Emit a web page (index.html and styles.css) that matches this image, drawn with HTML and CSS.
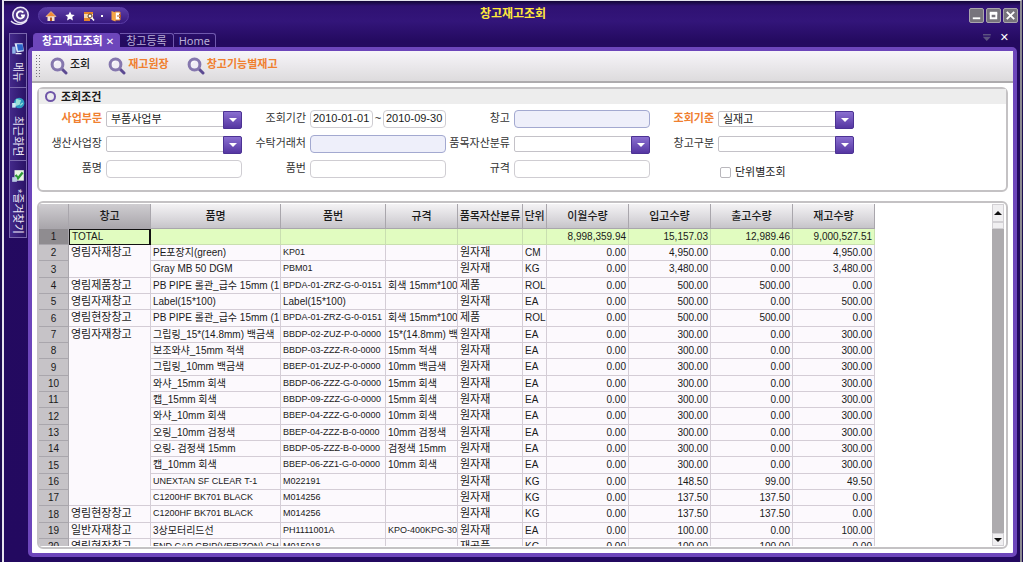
FILE: index.html
```html
<!DOCTYPE html>
<html lang="ko">
<head>
<meta charset="utf-8">
<title>창고재고조회</title>
<link rel="stylesheet" href="styles.css">
</head>
<body>
<svg class="defs" aria-hidden="true">
  <symbol id="lens" viewBox="0 0 18 18">
    <path d="M11.5 11.5 16 16" stroke="#5c4a92" stroke-width="3" stroke-linecap="round"/>
    <circle cx="7.5" cy="7.5" r="5.4" fill="#f1eef6" stroke="#8577ae" stroke-width="3"/>
    <path d="M4.5 7a3 3 0 0 1 3-2.600" fill="none" stroke="#fff" stroke-width="1"/>
  </symbol>
</svg>
<div class="window">
  <header class="titlebar">
    <svg class="logo" viewBox="0 0 20 20" aria-hidden="true">
      <circle cx="10.500" cy="9" r="7.700" fill="#54398f" stroke="#e8e4f5" stroke-width="1.600"/>
      <path d="M1 15c4 4.500 12 4.500 16-1" fill="none" stroke="#e8e4f5" stroke-width="1.400"/>
      <path d="M13.300 6.600A3.600 3.600 0 1 0 14 9.500H11" fill="none" stroke="#fff" stroke-width="1.900"/>
    </svg>
    <nav class="quick">
      <button aria-label="홈"><svg viewBox="0 0 12 12"><path d="M1 6.500 6 1.500l5 5z" fill="#f08a35" stroke="#ffd2a0" stroke-width=".7"/><path d="M2.500 6.500h7V11h-7z" fill="#f6e3cf"/><path d="M5 7.500h2V11H5z" fill="#b4561c"/></svg></button>
      <button aria-label="즐겨찾기"><svg viewBox="0 0 12 12"><path d="m6 1.500 1.400 3 3.300.4-2.400 2.200.6 3.300L6 8.800l-2.900 1.600.6-3.300L1.300 4.900l3.300-.4z" fill="#fff"/></svg></button>
      <button aria-label="화면찾기"><svg viewBox="0 0 12 12"><path d="M1 2h9v7H1z" fill="#f7d9a8"/><path d="M1 2h9v2H1zM1 8h6v3H1z" fill="#e5862b"/><circle cx="7" cy="6" r="2" fill="#fff" stroke="#5b3a20"/><path d="m8.500 7.500 2.500 3" stroke="#fff" stroke-width="1.500"/></svg></button>
      <i class="dot"></i>
      <button aria-label="종료"><svg viewBox="0 0 12 12"><path d="M5 2h5v8H5z" fill="#fff" stroke="#e5862b"/><path d="m1.500 1 4 1.500v9l-4-1.500z" fill="#f6a545"/><path d="M7 6h4M9 4l2 2-2 2" fill="none" stroke="#b4561c"/></svg></button>
    </nav>
    <h1>창고재고조회</h1>
    <div class="controls">
      <button aria-label="최소화"><svg viewBox="0 0 14 14"><path d="M3 10h8" stroke="#fff" stroke-width="2"/></svg></button>
      <button aria-label="최대화"><svg viewBox="0 0 14 14"><path d="M4 5h6v5H4z" fill="none" stroke="#fff" stroke-width="2"/><path d="M3 4.500h8" stroke="#fff" stroke-width="3"/></svg></button>
      <button aria-label="닫기"><svg viewBox="0 0 14 14"><path d="m3 3 8 8m0-8-8 8" stroke="#fff" stroke-width="2"/></svg></button>
    </div>
  </header>
  <div class="body">
    <aside class="side">
      <button class="s1"><svg viewBox="0 0 12 12"><path d="M3 1h7l1 7-6 1z" fill="#dce9fb"/><path d="M5 2h5l.5 5L6 7.500z" fill="#2c64c8"/><path d="M1 4h3v6H1z" fill="#8fb4e8"/><path d="M4 10h5" stroke="#fff"/></svg><span>메뉴</span></button>
      <button class="s2"><svg viewBox="0 0 12 12"><circle cx="7" cy="6" r="4.500" fill="#2e9ac0"/><path d="M5 3l3 1-1 3-3 1zM8 8l2-2" fill="#9be3d9" stroke="#9be3d9"/><path d="M1 6h3v4H1z" fill="#cfe8f6"/></svg><span>최근화면</span></button>
      <button class="s3"><svg viewBox="0 0 12 12"><path d="M3 1h8v9H3z" fill="#e9f5e4"/><path d="m4 5 2 3 4-5" fill="none" stroke="#2f9a37" stroke-width="2"/><path d="M1 7h4v4H1z" fill="#b8cbe4"/></svg><span>*즐겨찾기</span></button>
    </aside>
    <div class="work">
      <nav class="tabs">
        <a class="tab on" href="#">창고재고조회 <b>✕</b></a>
        <a class="tab" href="#">창고등록</a>
        <a class="tab latin" href="#">Home</a>
        <span class="tabtools"><button class="list" aria-label="탭 목록"></button><button aria-label="탭 닫기">✕</button></span>
      </nav>
      <main class="frame">
        <div class="toolbar">
          <i class="grip"></i>
          <button class="t1"><svg><use href="#lens"/></svg>조회</button>
          <button class="hot"><svg><use href="#lens"/></svg>재고원장</button>
          <button class="hot"><svg><use href="#lens"/></svg>창고기능별재고</button>
        </div>
        <section class="panel search">
          <h2>조회조건</h2>
          <form class="fields">
            <div class="field hot"><label for="f1">사업부문</label><span class="combo"><select id="f1"><option>부품사업부</option></select></span></div>
            <div class="field"><label for="f2">조회기간</label><span class="range"><input id="f2" value="2010-01-01"><span>~</span><input aria-label="종료일" value="2010-09-30"></span></div>
            <div class="field"><label for="f3">창고</label><input id="f3" class="code"></div>
            <div class="field hot"><label for="f4">조회기준</label><span class="combo"><select id="f4"><option>실재고</option></select></span></div>
            <div class="field"><label for="f5">생산사업장</label><span class="combo"><select id="f5"><option></option></select></span></div>
            <div class="field"><label for="f6">수탁거래처</label><input id="f6" class="code"></div>
            <div class="field"><label for="f7">품목자산분류</label><span class="combo"><select id="f7"><option></option></select></span></div>
            <div class="field"><label for="f8">창고구분</label><span class="combo"><select id="f8"><option></option></select></span></div>
            <div class="field"><label for="f9">품명</label><input id="f9"></div>
            <div class="field"><label for="f10">품번</label><input id="f10"></div>
            <div class="field"><label for="f11">규격</label><input id="f11"></div>
            <div class="check"><input type="checkbox" id="f12"><label for="f12">단위별조회</label></div>
          </form>
        </section>
        <section class="panel grid">
          <div class="sheet">
          <table>
            <colgroup><col class="w30"><col class="w82"><col class="w130"><col class="w105"><col class="w72"><col class="w65"><col class="w24"><col class="w82"><col class="w82"><col class="w82"><col class="w82"></colgroup>
            <thead><tr><th></th><th class="sel">창고</th><th>품명</th><th>품번</th><th>규격</th><th>품목자산분류</th><th>단위</th><th>이월수량</th><th>입고수량</th><th>출고수량</th><th>재고수량</th></tr></thead>
            <tbody>
            <tr class="total"><th>1</th><td class="cur">TOTAL</td><td></td><td></td><td></td><td></td><td></td><td class="n">8,998,359.94</td><td class="n">15,157.03</td><td class="n">12,989.46</td><td class="n">9,000,527.51</td></tr>
            <tr><th>2</th><td class="k" rowspan="2">영림자재창고</td><td>PE포장지(green)</td><td class="c">KP01</td><td></td><td class="k">원자재</td><td class="c">CM</td><td class="n">0.00</td><td class="n">4,950.00</td><td class="n">0.00</td><td class="n">4,950.00</td></tr>
            <tr><th>3</th><td>Gray MB 50 DGM</td><td class="c">PBM01</td><td></td><td class="k">원자재</td><td class="c">KG</td><td class="n">0.00</td><td class="n">3,480.00</td><td class="n">0.00</td><td class="n">3,480.00</td></tr>
            <tr><th>4</th><td class="k">영림제품창고</td><td>PB PIPE 롤관_급수 15mm (1</td><td class="c">BPDA-01-ZRZ-G-0-0151</td><td>회색 15mm*100M</td><td class="k">제품</td><td class="c">ROL</td><td class="n">0.00</td><td class="n">500.00</td><td class="n">500.00</td><td class="n">0.00</td></tr>
            <tr><th>5</th><td class="k">영림자재창고</td><td>Label(15*100)</td><td>Label(15*100)</td><td></td><td class="k">원자재</td><td class="c">EA</td><td class="n">0.00</td><td class="n">500.00</td><td class="n">0.00</td><td class="n">500.00</td></tr>
            <tr><th>6</th><td class="k">영림현장창고</td><td>PB PIPE 롤관_급수 15mm (1</td><td class="c">BPDA-01-ZRZ-G-0-0151</td><td>회색 15mm*100M</td><td class="k">제품</td><td class="c">ROL</td><td class="n">0.00</td><td class="n">500.00</td><td class="n">500.00</td><td class="n">0.00</td></tr>
            <tr><th>7</th><td class="k" rowspan="11">영림자재창고</td><td>그립링_15*(14.8mm) 백금색</td><td class="c">BBDP-02-ZUZ-P-0-0000</td><td>15*(14.8mm) 백</td><td class="k">원자재</td><td class="c">EA</td><td class="n">0.00</td><td class="n">300.00</td><td class="n">0.00</td><td class="n">300.00</td></tr>
            <tr><th>8</th><td>보조와샤_15mm 적색</td><td class="c">BBDP-03-ZZZ-R-0-0000</td><td>15mm 적색</td><td class="k">원자재</td><td class="c">EA</td><td class="n">0.00</td><td class="n">300.00</td><td class="n">0.00</td><td class="n">300.00</td></tr>
            <tr><th>9</th><td>그립링_10mm 백금색</td><td class="c">BBEP-01-ZUZ-P-0-0000</td><td>10mm 백금색</td><td class="k">원자재</td><td class="c">EA</td><td class="n">0.00</td><td class="n">300.00</td><td class="n">0.00</td><td class="n">300.00</td></tr>
            <tr><th>10</th><td>와샤_15mm 회색</td><td class="c">BBDP-06-ZZZ-G-0-0000</td><td>15mm 회색</td><td class="k">원자재</td><td class="c">EA</td><td class="n">0.00</td><td class="n">300.00</td><td class="n">0.00</td><td class="n">300.00</td></tr>
            <tr><th>11</th><td>캡_15mm 회색</td><td class="c">BBDP-09-ZZZ-G-0-0000</td><td>15mm 회색</td><td class="k">원자재</td><td class="c">EA</td><td class="n">0.00</td><td class="n">300.00</td><td class="n">0.00</td><td class="n">300.00</td></tr>
            <tr><th>12</th><td>와샤_10mm 회색</td><td class="c">BBEP-04-ZZZ-G-0-0000</td><td>10mm 회색</td><td class="k">원자재</td><td class="c">EA</td><td class="n">0.00</td><td class="n">300.00</td><td class="n">0.00</td><td class="n">300.00</td></tr>
            <tr><th>13</th><td>오링_10mm 검정색</td><td class="c">BBEP-04-ZZZ-B-0-0000</td><td>10mm 검정색</td><td class="k">원자재</td><td class="c">EA</td><td class="n">0.00</td><td class="n">300.00</td><td class="n">0.00</td><td class="n">300.00</td></tr>
            <tr><th>14</th><td>오링- 검정색 15mm</td><td class="c">BBDP-05-ZZZ-B-0-0000</td><td>검정색 15mm</td><td class="k">원자재</td><td class="c">EA</td><td class="n">0.00</td><td class="n">300.00</td><td class="n">0.00</td><td class="n">300.00</td></tr>
            <tr><th>15</th><td>캡_10mm 회색</td><td class="c">BBEP-06-ZZ1-G-0-0000</td><td>10mm 회색</td><td class="k">원자재</td><td class="c">EA</td><td class="n">0.00</td><td class="n">300.00</td><td class="n">0.00</td><td class="n">300.00</td></tr>
            <tr><th>16</th><td class="c">UNEXTAN SF CLEAR T-1</td><td class="c">M022191</td><td></td><td class="k">원자재</td><td class="c">KG</td><td class="n">0.00</td><td class="n">148.50</td><td class="n">99.00</td><td class="n">49.50</td></tr>
            <tr><th>17</th><td class="c">C1200HF BK701 BLACK</td><td class="c">M014256</td><td></td><td class="k">원자재</td><td class="c">KG</td><td class="n">0.00</td><td class="n">137.50</td><td class="n">137.50</td><td class="n">0.00</td></tr>
            <tr><th>18</th><td class="k">영림현장창고</td><td class="c">C1200HF BK701 BLACK</td><td class="c">M014256</td><td></td><td class="k">원자재</td><td class="c">KG</td><td class="n">0.00</td><td class="n">137.50</td><td class="n">137.50</td><td class="n">0.00</td></tr>
            <tr><th>19</th><td class="k">일반자재창고</td><td>3상모터리드선</td><td class="c">PH1111001A</td><td class="c">KPO-400KPG-300</td><td class="k">원자재</td><td class="c">EA</td><td class="n">0.00</td><td class="n">100.00</td><td class="n">0.00</td><td class="n">100.00</td></tr>
            <tr><th>20</th><td class="k">영림현장창고</td><td class="c">END CAP GRIP(VERIZON) CH</td><td class="c">M015018</td><td></td><td class="k">재공품</td><td class="c">KG</td><td class="n">0.00</td><td class="n">100.00</td><td class="n">100.00</td><td class="n">0.00</td></tr>
            </tbody>
          </table>
          </div>
          <div class="scroll">
            <button class="up" aria-label="위로"></button>
            <i class="thumb"></i>
            <button class="down" aria-label="아래로"></button>
          </div>
        </section>
      </main>
    </div>
  </div>
</div>
</body>
</html>
```
FILE: styles.css
```css
* { box-sizing: border-box; }
body {
  margin: 0;
  padding: 0 1px 0 2px;
  background: #1c0c50;
  color: #1a1a1a;
  font: 11px/16px "Liberation Sans", "Noto Sans CJK KR", sans-serif;
}
button, input, select { font: inherit; color: inherit; margin: 0; }
button { border: 0; padding: 0; background: none; }
a { text-decoration: none; color: inherit; }
.defs { display: none; }

.window {
  display: flex;
  flex-direction: column;
  height: 100vh;
  border: solid #e6e4ee;
  border-width: 1px 2px 0 2px;
  border-right-color: #8c8a92;
  background: linear-gradient(to bottom, #120636 0, #2f1172 5px, #33157a 20px, #240a60 40px, #230960);
}

/* title bar */
.titlebar {
  display: flex;
  align-items: center;
  flex: none;
  height: 32px;
  padding: 0 2px 3px 6px;
}
.logo { width: 20px; height: 20px; margin-right: 8px; }
.quick {
  display: flex;
  align-items: center;
  justify-content: space-between;
  width: 91px;
  height: 17px;
  padding: 0 6px;
  border: 1px solid #5a3da6;
  border-radius: 9px;
  background: linear-gradient(#5b3da6, #38197e);
}
.quick button, .quick svg { display: block; width: 12px; height: 12px; }
.dot { width: 2px; height: 2px; background: #fff; }
.titlebar h1 {
  flex: 1;
  margin: 0 72px 3px 0;
  text-align: center;
  font-size: 12px;
  line-height: 16px;
  color: #ffe93b;
}
.controls { display: flex; gap: 2px; }
.controls button {
  width: 15px;
  height: 15px;
  border: 1px solid #a9a6ac;
  border-radius: 2px;
  background: #77747c;
}
.controls svg { display: block; width: 13px; height: 13px; }

/* side tabs */
.body { display: flex; flex: 1; min-height: 0; padding: 0 3px 5px 5px; }
.side { width: 19px; flex: none; }
.side button {
  display: flex;
  flex-direction: column;
  align-items: center;
  gap: 6px;
  width: 18px;
  padding-top: 8px;
  border: 1px solid #7a68ae;
  border-bottom-width: 0;
  color: #e9e4f6;
  background: linear-gradient(to right, #43298a, #2a1266);
}
.side .s1 { height: 54px; }
.side .s2 { height: 73px; }
.side .s3 { height: 78px; border-bottom-width: 1px; }
.side svg { width: 14px; height: 14px; flex: none; }
.side span { writing-mode: vertical-rl; text-orientation: sideways; line-height: 14px; white-space: nowrap; }

/* document tabs */
.work { display: flex; flex-direction: column; flex: 1; min-width: 0; }
.tabs { display: flex; flex: none; height: 14px; padding-left: 5px; }
.tab {
  height: 14px;
  padding: 0 6px;
  border: 1px solid #6f58ad;
  border-left-width: 0;
  border-bottom: 0;
  border-radius: 0 3px 0 0;
  line-height: 14px;
  color: #b9aed6;
  white-space: nowrap;
}
.tab.latin { padding: 0 5px; font: 11px/14px "Noto Sans", sans-serif; }
.tab.on {
  padding: 0 5px 0 9px;
  border-color: #6d46bb;
  border-radius: 4px 4px 0 0;
  background: #6d46bb;
  color: #fff;
  font-weight: bold;
}
.tab b { font: 10px "DejaVu Sans", sans-serif; }
.tabtools { display: flex; align-items: center; gap: 9px; margin-left: auto; padding: 0 8px 5px 0; color: #fff; }
.tabtools button { font: 11px/10px "DejaVu Sans", sans-serif; }
.tabtools .list {
  width: 8px;
  height: 7px;
  background: #5c5380;
  clip-path: polygon(0 0, 100% 0, 100% 20%, 0 20%, 0 40%, 100% 40%, 50% 100%, 0 40%);
}

.frame {
  display: flex;
  flex-direction: column;
  flex: 1;
  min-height: 0;
  padding-bottom: 4px;
  border: 4px solid #6d46bb;
  border-radius: 5px;
  background: #fff;
}

/* toolbar */
.toolbar {
  display: flex;
  align-items: center;
  flex: none;
  gap: 18px;
  height: 32px;
  margin-bottom: 4px;
  padding: 0 3px;
  border-bottom: 2px solid #adabad;
  background: linear-gradient(#f7f5f9, #dddbdd);
}
.grip {
  width: 5px;
  height: 25px;
  margin-right: -8px;
  background: radial-gradient(circle, #77747c 1px, transparent 1px) 0 0 / 3px 3px;
}
.toolbar button { display: flex; gap: 2px; line-height: 14px; font-weight: bold; }
.toolbar svg { width: 18px; height: 18px; }
.toolbar .t1 { font-weight: 500; }
.hot, .toolbar .hot { color: #f08030; }

/* panels */
.panel {
  margin: 0 5px;
  border: 2px solid #c4c2c4;
  border-radius: 6px;
  background: #fff;
}
.search { flex: none; height: 105px; margin-bottom: 9px; }
.search h2 {
  display: flex;
  align-items: center;
  gap: 5px;
  height: 15px;
  margin: 0;
  padding-left: 6px;
  background: #ededed;
  font-size: 11px;
}
.search h2::before { content: ""; width: 7px; height: 7px; border: 2px solid #6f56a8; border-radius: 50%; }
.fields {
  display: grid;
  grid-template-columns: repeat(4, 202px);
  gap: 7px 2px;
  padding: 6px 0 0 1px;
}
.field { display: flex; align-items: center; gap: 4px; height: 18px; }
.field label { width: 62px; padding-bottom: 3px; text-align: right; white-space: nowrap; color: #333; }
.field.hot label { color: #f08030; font-weight: bold; }
.field input {
  width: 136px;
  height: 18px;
  padding: 0 1px 3px;
  border: 1px solid #cfcdd2;
  border-radius: 4px;
  background: #fff;
}
.field .code { border-color: #a3a9d0; background: #eeeffa; }
.range { display: flex; justify-content: space-between; width: 136px; }
.range input { width: 63px; padding-left: 2px; }
.combo { position: relative; display: flex; width: 136px; }
.combo select {
  appearance: none;
  width: 100%;
  height: 16px;
  padding: 0 18px 0 4px;
  border: 1px solid #c4c2c8;
  border-radius: 2px;
  background: #fff;
  color: #1a1a1a;
  line-height: 14px;
}
.combo::before {
  content: "";
  position: absolute;
  right: 0;
  top: 0;
  width: 17px;
  height: 16px;
  border: 1px solid #4c3294;
  border-radius: 0 2px 2px 0;
  background: linear-gradient(#8a6fd0, #5536a2);
  pointer-events: none;
}
.combo::after {
  content: "";
  position: absolute;
  right: 5px;
  top: 7px;
  border: 4px solid transparent;
  border-top-color: #fff;
  border-bottom: 0;
  pointer-events: none;
}
.check { display: flex; align-items: center; gap: 4px; padding: 6px 0 0 68px; height: 18px; }
.check input { appearance: none; width: 11px; height: 11px; border: 1px solid #b9b7bc; border-radius: 2px; flex: none; }
.check label { white-space: nowrap; }

/* stock table */
.grid { display: flex; flex: 1; min-height: 0; padding: 1px 2px 1px 0; overflow: hidden; }
.sheet { flex: 1; min-width: 0; overflow: hidden; }
table { table-layout: fixed; width: 836px; border-collapse: separate; border-spacing: 0; }
.w30 { width: 30px; }
.w82 { width: 82px; }
.w130 { width: 130px; }
.w105 { width: 105px; }
.w72 { width: 72px; }
.w65 { width: 65px; }
.w24 { width: 24px; }
th, td { padding: 0 2px; border: solid #d4cdd6; border-width: 0 1px 1px 0; overflow: hidden; white-space: nowrap; }
thead th {
  height: 25px;
  padding: 0;
  border-color: #a9a6ac;
  background: linear-gradient(#f4f3f5, #dad8dc 60%, #c6c4c9);
  font-weight: 500;
}
thead .sel, thead th:first-child { background: linear-gradient(#cfcdd1, #a9a6ab); }
tbody tr { height: 16px; }
tbody tr:nth-child(3n) { height: 17px; }
tbody td, tbody th { line-height: 15px; }
tbody th { border-color: #a9a6ac; background: #c6c3c7; font-size: 10px; font-weight: normal; }
td { background: #fcf9fd; font-size: 10px; vertical-align: top; }
td.k { font-size: 11px; }
td.c { font-size: 9px; }
td.c:nth-last-child(5) { padding-right: 0; font-size: 10px; }
td.n { text-align: right; }
.total td { background: #e1fcc0; border-color: #c9dfb0; }
.total th { background: #8f8c90; }
.total .cur { border: 1px solid #111; border-right-width: 2px; line-height: 13px; }

.scroll { display: flex; flex-direction: column; width: 12px; background: #adabae; }
.scroll button, .thumb { border: 1px solid #d2d0d4; background: #f0eff1; }
.scroll button { display: flex; align-items: center; justify-content: center; height: 13px; }
.scroll .up { height: 18px; }
.thumb { height: 7px; }
.scroll button::before { content: ""; border: 4px solid transparent; }
.up::before { border-bottom-color: #111 !important; border-top: 0 !important; }
.down { margin-top: auto; }
.down::before { border-top-color: #111 !important; border-bottom: 0 !important; }
```
